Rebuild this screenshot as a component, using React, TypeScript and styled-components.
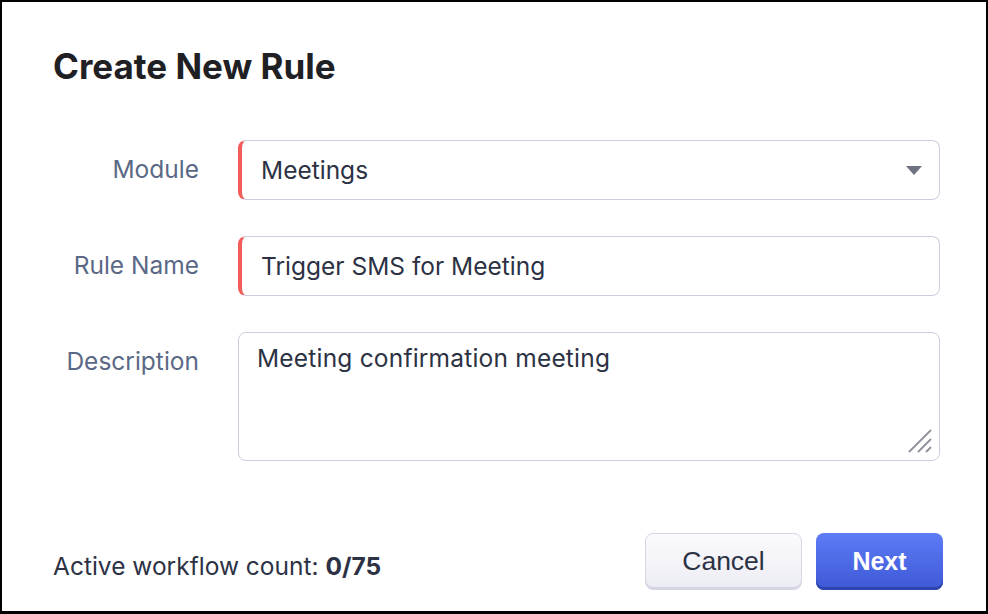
import React from "react";
import styled, { createGlobalStyle } from "styled-components";

const Global = createGlobalStyle`
  html, body { margin: 0; padding: 0; background: #fff; }
  * { box-sizing: border-box; }
  body { font-family: Inter, "Noto Sans", sans-serif; }
`;

const Frame = styled.div`
  width: 988px;
  height: 614px;
  border: 2px solid #000;
  border-bottom-width: 3px;
  background: #fff;
  display: flex;
  flex-direction: column;
  padding: 43px 43px 0 49px;
`;

const Title = styled.h1`
  margin: 0;
  padding-left: 2px;
  font-size: 35px;
  font-weight: 700;
  color: #1f2024;
  letter-spacing: 0;
  line-height: 42px;
`;

const Form = styled.div`
  margin-top: 53px;
  display: grid;
  grid-template-columns: 148px 702px;
  column-gap: 39px;
  row-gap: 36px;
  align-items: start;
`;

const Label = styled.label`
  text-align: right;
  font-size: 24.5px;
  color: #5b6986;
  line-height: 58px;
  white-space: nowrap;
`;

const Field = styled.div<{ $required?: boolean; $height: number }>`
  position: relative;
  height: ${(p) => p.$height}px;
  border: 1px solid #cfcddd;
  border-radius: 8px;
  ${(p) => (p.$required ? "border-left: 4px solid #f45b5b;" : "")}
  display: flex;
  align-items: ${(p) => (p.$required ? "center" : "flex-start")};
  padding: ${(p) => (p.$required ? "0 20px 0 19px" : "10px 18px")};
  font-size: 24.5px;
  color: #2c3244;
  letter-spacing: ${(p) => (p.$required ? "0" : "0.2px")};
`;

const Caret = styled.span`
  position: absolute;
  right: 17px;
  top: 50%;
  margin-top: -4px;
  width: 0;
  height: 0;
  border-left: 8px solid transparent;
  border-right: 8px solid transparent;
  border-top: 9px solid #6f7380;
`;

const Grip = styled.svg`
  position: absolute;
  right: 7px;
  bottom: 7px;
`;

const Footer = styled.div`
  margin-top: auto;
  margin-bottom: 21px;
  display: flex;
  align-items: center;
  justify-content: space-between;
`;

const Count = styled.div`
  font-size: 24.5px;
  color: #2c3244;
  padding-left: 2px;
  padding-top: 8px;
  b { font-weight: 700; }
`;

const Buttons = styled.div`
  display: flex;
  gap: 14px;
`;

const Button = styled.button<{ $primary?: boolean }>`
  height: 57px;
  border-radius: 8px;
  font-family: "Liberation Sans", Arial, sans-serif;
  cursor: pointer;
  ${(p) =>
    p.$primary
      ? `
    width: 127px;
    font-size: 25px;
    color: #fff;
    font-weight: 700;
    border: none;
    background: linear-gradient(#5d7cf6, #3e58d6);
    box-shadow: inset 0 -3px 0 #2f44ad;
  `
      : `
    width: 157px;
    font-size: 26.5px;
    color: #2c3244;
    border: 1px solid #d7d6e3;
    background: linear-gradient(#fbfbfd, #ececf4);
    box-shadow: inset 0 -2px 0 #d3d3e2;
  `}
`;

export default function App() {
  return (
    <>
      <Global />
      <Frame>
        <Title>Create New Rule</Title>
        <Form>
          <Label>Module</Label>
          <Field $required $height={60}>
            Meetings
            <Caret />
          </Field>
          <Label>Rule Name</Label>
          <Field $required $height={60}>
            Trigger SMS for Meeting
          </Field>
          <Label>Description</Label>
          <Field $height={129}>
            Meeting confirmation meeting
            <Grip width="24" height="24" viewBox="0 0 24 24">
              <line x1="23" y1="1" x2="1" y2="23" stroke="#8e919c" strokeWidth="1.8" />
              <line x1="23" y1="10" x2="10" y2="23" stroke="#8e919c" strokeWidth="1.8" />
              <line x1="23" y1="18" x2="18" y2="23" stroke="#8e919c" strokeWidth="1.8" />
            </Grip>
          </Field>
        </Form>
        <Footer>
          <Count>
            Active workflow count: <b>0/75</b>
          </Count>
          <Buttons>
            <Button>Cancel</Button>
            <Button $primary>Next</Button>
          </Buttons>
        </Footer>
      </Frame>
    </>
  );
}
